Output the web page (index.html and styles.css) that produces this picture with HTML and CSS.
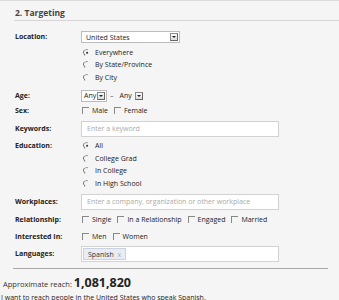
FILE: index.html
```html
<!DOCTYPE html>
<html lang="en">
<head>
    <meta charset="UTF-8">
    <title>Targeting</title>
    <link rel="stylesheet" href="styles.css">
</head>
<body>
    <div class="panel">
        <h2 class="title">2. Targeting</h2>

        <div class="row first">
            <div class="label">Location:</div>
            <div class="field">
                <div class="select wide"><span>United States</span><i class="arrow"></i></div>
                <div class="options">
                    <div class="opt"><span class="radio on"></span>Everywhere</div>
                    <div class="opt"><span class="radio"></span>By State/Province</div>
                    <div class="opt"><span class="radio"></span>By City</div>
                </div>
            </div>
        </div>

        <div class="row age">
            <div class="label">Age:</div>
            <div class="field inline">
                <div class="select small"><span>Any</span><i class="arrow"></i></div>
                <span class="dash">–</span>
                <div class="select small plain"><span>Any</span><i class="arrow"></i></div>
            </div>
        </div>

        <div class="row sex">
            <div class="label">Sex:</div>
            <div class="field inline">
                <span class="check"></span><span class="ctext">Male</span>
                <span class="check"></span><span class="ctext">Female</span>
            </div>
        </div>

        <div class="row keywords">
            <div class="label">Keywords:</div>
            <div class="field"><div class="input">Enter a keyword</div></div>
        </div>

        <div class="row education">
            <div class="label">Education:</div>
            <div class="field options">
                <div class="opt"><span class="radio on"></span>All</div>
                <div class="opt"><span class="radio"></span>College Grad</div>
                <div class="opt"><span class="radio"></span>In College</div>
                <div class="opt"><span class="radio"></span>In High School</div>
            </div>
        </div>

        <div class="row workplaces">
            <div class="label">Workplaces:</div>
            <div class="field"><div class="input">Enter a company, organization or other workplace</div></div>
        </div>

        <div class="row relationship">
            <div class="label">Relationship:</div>
            <div class="field inline">
                <span class="check"></span><span class="ctext">Single</span>
                <span class="check"></span><span class="ctext">In a Relationship</span>
                <span class="check"></span><span class="ctext">Engaged</span>
                <span class="check"></span><span class="ctext">Married</span>
            </div>
        </div>

        <div class="row interested">
            <div class="label">Interested In:</div>
            <div class="field inline">
                <span class="check"></span><span class="ctext">Men</span>
                <span class="check"></span><span class="ctext">Women</span>
            </div>
        </div>

        <div class="row languages">
            <div class="label">Languages:</div>
            <div class="field"><div class="input tokens"><span class="token">Spanish <b>x</b></span></div></div>
        </div>

        <div class="reach">
            <div class="reach-line">Approximate reach: <strong>1,081,820</strong></div>
            <div class="summary">I want to reach people in the United States who speak Spanish.</div>
        </div>
    </div>
</body>
</html>
```

FILE: styles.css
```css
body {
    margin: 0;
    background-color: #f5f5f5;
    font-family: 'Open Sans', 'DejaVu Sans', sans-serif;
    font-size: 7px;
    color: #333;
}
.panel {
    border-top: 1px solid #dcdcdc;
}
.title {
    margin: 0 0 0 14px;
    padding: 6px 0 0 1px;
    height: 13px;
    font-size: 8.5px;
    font-weight: bold;
    color: #444;
    border-bottom: 1px solid #d6d6d6;
    line-height: 11px;
}
.row {
    display: flex;
    padding-left: 15px;
}
.label {
    width: 66px;
    flex: none;
    font-weight: bold;
    color: #222;
    line-height: 12px;
}
.field.inline {
    display: flex;
    align-items: center;
    height: 12px;
}
.first { margin-top: 10px; }
.age { margin-top: 6px; }
.sex { margin-top: 3px; }
.keywords { margin-top: 4px; }
.education { margin-top: 3px; }
.workplaces { margin-top: 4px; }
.relationship { margin-top: 4px; }
.interested { margin-top: 5px; }
.languages { margin-top: 3px; }

.keywords .label, .workplaces .label, .languages .label { line-height: 16px; }

.select {
    display: flex;
    align-items: center;
    justify-content: space-between;
    box-sizing: border-box;
    height: 12px;
    background: #fff;
    border: 1px solid #bcbcbc;
    padding: 0 1px 0 4px;
    color: #222;
}
.select.wide { width: 99px; }
.select.small { width: 26px; padding-left: 2px; }
.select.plain { background: transparent; border-color: transparent; width: 28px; }
.arrow {
    width: 8px;
    height: 8px;
    box-sizing: border-box;
    border: 1px solid #8a8a8a;
    border-right-color: #666;
    border-bottom-color: #666;
    background: linear-gradient(#fafafa, #dcdcdc);
    position: relative;
}
.arrow::after {
    content: '';
    position: absolute;
    left: 1px;
    top: 2px;
    border-left: 2px solid transparent;
    border-right: 2px solid transparent;
    border-top: 2px solid #222;
}
.dash { margin: 0 3px; color: #555; }

.options { padding-top: 3px; }
.opt {
    display: flex;
    align-items: center;
    height: 12.5px;
    padding-left: 2px;
    color: #222;
}
.field.options { padding-top: 0; }
.radio {
    width: 5px;
    height: 5px;
    border-radius: 50%;
    border: 1px solid transparent;
    border-left-color: #777;
    border-top-color: #999;
    margin-right: 5px;
    position: relative;
    transform: rotate(-20deg);
}
.radio.on::after {
    content: '';
    position: absolute;
    left: 1.5px;
    top: 1.5px;
    width: 2px;
    height: 2px;
    border-radius: 50%;
    background: #333;
}
.check {
    width: 6px;
    height: 6px;
    border-left: 1px solid #888;
    border-top: 1px solid #888;
    margin: 0 3px 0 1px;
}
.ctext { margin-right: 5px; color: #222; }

.input {
    box-sizing: border-box;
    width: 198px;
    height: 16px;
    background: #fff;
    border: 1px solid #d2d2d2;
    padding: 0 5px;
    line-height: 14px;
    color: #aaa;
}
.tokens { padding: 1px 1px; }
.token {
    display: inline-block;
    height: 12px;
    line-height: 12px;
    padding: 0 4px;
    background: #e8edf3;
    border: 1px solid #c9d3e0;
    box-sizing: border-box;
    color: #333;
}
.token b { font-weight: normal; color: #aab; margin-left: 2px; }

.reach {
    margin: 6px 11px 0 13px;
    border-top: 1px solid #a8a8a8;
    padding-top: 6px;
}
.reach-line {
    margin-left: -10px;
    font-size: 7.5px;
    color: #333;
    line-height: 15px;
}
.reach-line strong {
    font-size: 12.5px;
    color: #222;
}
.summary {
    margin-left: -12px;
    color: #222;
    line-height: 12px;
}
```
